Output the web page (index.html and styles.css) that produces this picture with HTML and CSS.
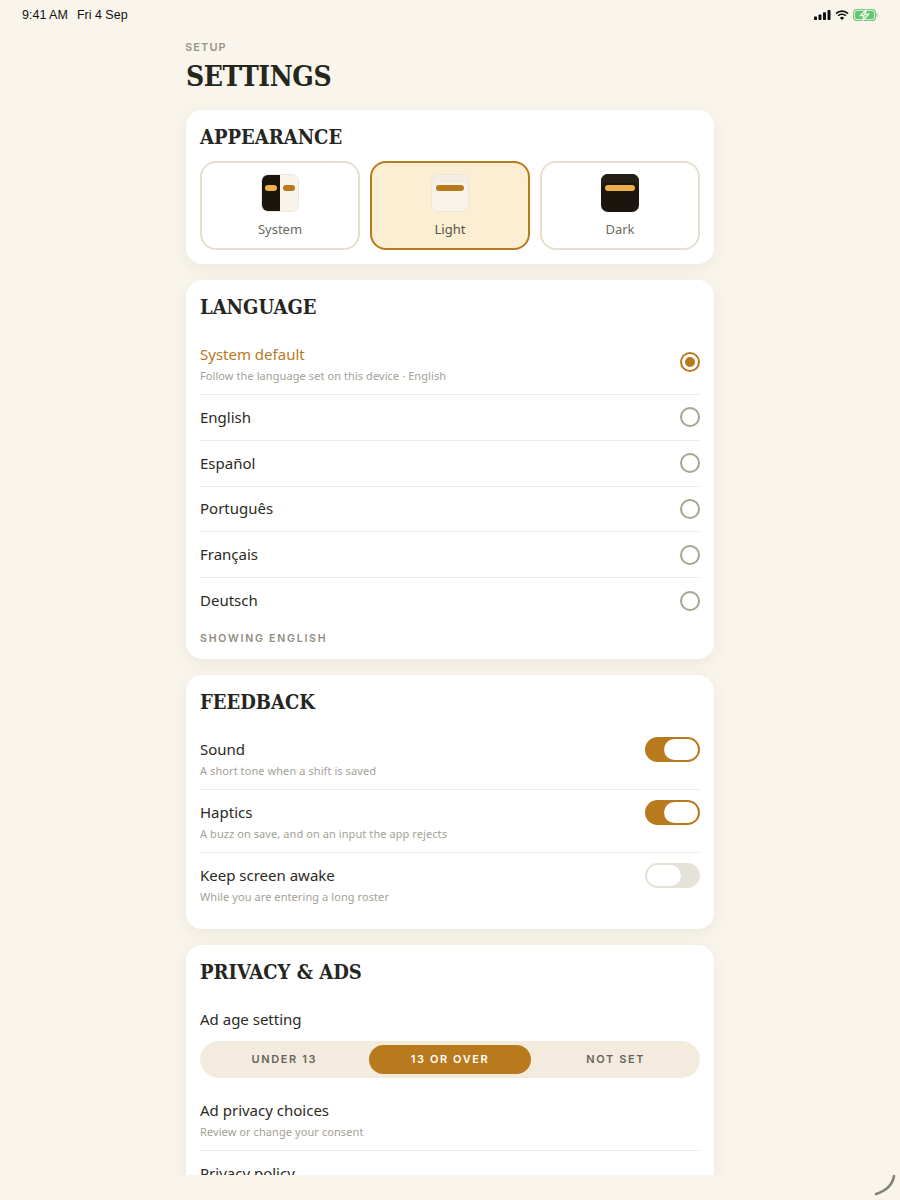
FILE: index.html
```html
<!DOCTYPE html>
<html lang="en">
  <head>
    <meta charset="UTF-8" />
    <meta name="viewport" content="width=device-width, initial-scale=1.0" />
    <title>Settings</title>
    <link rel="stylesheet" href="styles.css">
  </head>
  <body>
    <header class="status-bar">
      <div class="status-time">
        <span>9:41 AM</span>
        <span>Fri 4 Sep</span>
      </div>
      <div class="status-icons">
        <svg width="17" height="10" viewBox="0 0 17 10" aria-hidden="true">
          <rect x="0" y="6.5" width="3" height="3.5" rx="0.7" fill="#111" />
          <rect x="4.5" y="4.5" width="3" height="5.5" rx="0.7" fill="#111" />
          <rect x="9" y="2.2" width="3" height="7.8" rx="0.7" fill="#111" />
          <rect x="13.5" y="0" width="3" height="10" rx="0.7" fill="#111" />
        </svg>
        <svg width="14" height="10" viewBox="0 0 14 10" aria-hidden="true">
          <path d="M1 3.6a8.6 8.6 0 0 1 12 0M3.1 5.8a5.6 5.6 0 0 1 7.8 0" fill="none" stroke="#111" stroke-width="1.6" />
          <path d="M7 10 4.9 7.9a3 3 0 0 1 4.2 0z" fill="#111" />
        </svg>
        <svg width="25" height="12" viewBox="0 0 25 12" aria-hidden="true">
          <rect x="0.6" y="0.6" width="21.8" height="10.8" rx="3" fill="#f4f7e8" stroke="#72c97e" stroke-width="1.2" />
          <rect x="2" y="2" width="19" height="8" rx="2" fill="#62c673" />
          <path d="M23.4 4v4a2 2 0 0 0 1.3-2 2 2 0 0 0-1.3-2z" fill="#8fcf98" />
          <path d="M13.2 0.8 7.6 6.6h3.4l-1 4.6 5.6-6h-3.6z" fill="#62c673" stroke="#f4f7e8" stroke-width="1.4" />
        </svg>
      </div>
    </header>

    <div class="scroll">
      <main class="page">
        <p class="eyebrow">SETUP</p>
        <h1>SETTINGS</h1>

        <section class="card">
          <h2>APPEARANCE</h2>
          <div class="themes">
            <button class="theme">
              <span class="swatch swatch-system">
                <span class="half half-dark"><i class="bar bar-amber"></i></span>
                <span class="half half-light"><i class="bar bar-brown"></i></span>
              </span>
              <span class="theme-name">System</span>
            </button>
            <button class="theme is-active">
              <span class="swatch swatch-light"><i class="bar bar-brown"></i></span>
              <span class="theme-name">Light</span>
            </button>
            <button class="theme">
              <span class="swatch swatch-dark"><i class="bar bar-amber"></i></span>
              <span class="theme-name">Dark</span>
            </button>
          </div>
        </section>

        <section class="card">
          <h2>LANGUAGE</h2>
          <ul class="lang-list">
            <li class="lang lang-first is-selected">
              <div>
                <div class="row-title">System default</div>
                <div class="row-sub">Follow the language set on this device · English</div>
              </div>
              <span class="radio"></span>
            </li>
            <li class="lang"><div class="row-title">English</div><span class="radio"></span></li>
            <li class="lang"><div class="row-title">Español</div><span class="radio"></span></li>
            <li class="lang"><div class="row-title">Português</div><span class="radio"></span></li>
            <li class="lang"><div class="row-title">Français</div><span class="radio"></span></li>
            <li class="lang"><div class="row-title">Deutsch</div><span class="radio"></span></li>
          </ul>
          <p class="lang-note">SHOWING ENGLISH</p>
        </section>

        <section class="card">
          <h2>FEEDBACK</h2>
          <div class="toggle-list">
            <div class="toggle-row">
              <div class="toggle-text">
                <div class="row-title">Sound</div>
                <div class="row-sub">A short tone when a shift is saved</div>
              </div>
              <span class="switch is-on"></span>
            </div>
            <div class="toggle-row">
              <div class="toggle-text">
                <div class="row-title">Haptics</div>
                <div class="row-sub">A buzz on save, and on an input the app rejects</div>
              </div>
              <span class="switch is-on"></span>
            </div>
            <div class="toggle-row">
              <div class="toggle-text">
                <div class="row-title">Keep screen awake</div>
                <div class="row-sub">While you are entering a long roster</div>
              </div>
              <span class="switch"></span>
            </div>
          </div>
        </section>

        <section class="card">
          <h2>PRIVACY &amp; ADS</h2>
          <div class="row-title age-title">Ad age setting</div>
          <div class="segments">
            <span class="segment">UNDER 13</span>
            <span class="segment is-active">13 OR OVER</span>
            <span class="segment">NOT SET</span>
          </div>
          <div class="link-row">
            <div class="row-title">Ad privacy choices</div>
            <div class="row-sub">Review or change your consent</div>
          </div>
          <div class="link-row">
            <div class="row-title">Privacy policy</div>
          </div>
        </section>
      </main>
    </div>

    <svg class="corner-mark" width="24" height="24" viewBox="0 0 24 24" aria-hidden="true">
      <path d="M21 3C19.5 12 12.5 18 3 21" fill="none" stroke="#85827a" stroke-width="2.6" stroke-linecap="round" />
    </svg>
  </body>
</html>
```

FILE: styles.css
```css
* {
  box-sizing: border-box;
}

html,
body {
  margin: 0;
  height: 1200px;
  overflow: hidden;
}

body {
  background: #f9f5ec;
  color: #26251f;
  font-family: "Noto Sans", "Liberation Sans", sans-serif;
  position: relative;
}

.status-bar {
  display: flex;
  justify-content: space-between;
  align-items: center;
  height: 29px;
  padding: 1px 22px 0;
  color: #111;
  font-family: "Liberation Sans", sans-serif;
  font-size: 12.5px;
}

.status-time {
  display: flex;
  gap: 9px;
}

.status-icons {
  display: flex;
  align-items: center;
  gap: 4px;
}

.scroll {
  height: 1146px;
  overflow: hidden;
}

.page {
  width: 528px;
  margin: 0 auto;
}

.eyebrow {
  margin: 12px 0 0 -1px;
  color: #98968a;
  font-family: "Inter", sans-serif;
  font-size: 11px;
  font-weight: 600;
  line-height: 12px;
  letter-spacing: 1.1px;
}

h1 {
  margin: 5px 0 14px;
  color: #25271c;
  font-family: "DejaVu Serif Condensed", "DejaVu Serif", serif;
  font-size: 28px;
  font-weight: 700;
  line-height: 38px;
  letter-spacing: -0.4px;
}

h2 {
  margin: 0;
  color: #26251f;
  font-family: "DejaVu Serif Condensed", "DejaVu Serif", serif;
  font-size: 20px;
  font-weight: 700;
  line-height: 25px;
}

.card {
  margin-bottom: 16px;
  padding: 15px 14px 0;
  background: #fff;
  border-radius: 16px;
  box-shadow: 0 4px 16px rgba(120, 100, 60, 0.09);
}

.themes {
  display: flex;
  gap: 10px;
  margin-top: 11px;
  padding-bottom: 14px;
}

.theme {
  flex: 1;
  display: flex;
  flex-direction: column;
  align-items: center;
  height: 89px;
  padding: 11px 0 0;
  background: #fff;
  border: 2px solid #e6dfcf;
  border-radius: 16px;
  font: inherit;
}

.theme.is-active {
  background: #fbeed2;
  border-color: #b87a1c;
}

.swatch {
  display: flex;
  align-items: center;
  justify-content: center;
  width: 38px;
  height: 38px;
  padding: 0 4px 10px;
  border-radius: 7px;
  overflow: hidden;
}

.swatch-light {
  background: #f9f4ea;
  border: 1px solid #eee5d6;
  box-shadow: inset 0 8px 0 #f3eee5;
}

.swatch-dark {
  background: #1a150d;
  box-shadow: inset 0 9px 0 #241f15;
}

.swatch-system {
  padding: 0;
  border: 1px solid #eee5d6;
}

.half {
  flex: 1;
  display: flex;
  align-items: center;
  justify-content: center;
  height: 100%;
  padding-bottom: 10px;
}

.half-dark {
  background: #1a150d;
}

.half-light {
  background: #f9f4ea;
}

.bar {
  display: block;
  width: 100%;
  height: 6px;
  border-radius: 3px;
}

.half .bar {
  width: 12px;
}

.bar-amber {
  background: #eeb04a;
}

.bar-brown {
  background: #b87a1c;
}

.theme-name {
  margin-top: 8px;
  color: #6c6a62;
  font-size: 13px;
  line-height: 18px;
}

.is-active .theme-name {
  color: #55534a;
}

.row-title {
  color: #2b2a24;
  font-size: 15px;
  line-height: 21px;
}

.row-sub {
  margin-top: 3px;
  color: #a3a196;
  font-size: 11px;
  line-height: 15px;
  letter-spacing: 0.08px;
}

.lang-list {
  margin: 0;
  padding: 0;
  list-style: none;
}

.lang {
  display: flex;
  justify-content: space-between;
  align-items: center;
  height: 45.75px;
  border-bottom: 1px solid #f1eee7;
}

.lang-first {
  height: 66px;
  margin-top: 9px;
  padding-top: 4px;
}

.lang:last-child {
  border-bottom: 0;
}

.is-selected .row-title {
  color: #b87a1c;
}

.radio {
  flex: none;
  width: 20px;
  height: 20px;
  border: 2px solid #a5a591;
  border-radius: 50%;
}

.is-selected .radio {
  margin-bottom: 3px;
  border-color: #b87a1c;
}

.is-selected .radio::after {
  content: "";
  display: block;
  width: 10px;
  height: 10px;
  margin: 3px;
  background: #b87a1c;
  border-radius: 50%;
}

.lang-note {
  margin: 0;
  padding: 8px 0 13px;
  color: #8f8d80;
  font-family: "Inter", sans-serif;
  font-size: 10.5px;
  font-weight: 600;
  line-height: 14px;
  letter-spacing: 1.8px;
}

.toggle-list {
  margin-top: 12px;
}

.toggle-row {
  display: flex;
  justify-content: space-between;
  align-items: flex-start;
  height: 63px;
  padding-top: 7px;
  border-bottom: 1px solid #f1eee7;
}

.toggle-row:last-child {
  height: 76px;
  border-bottom: 0;
}

.toggle-text {
  padding-top: 5px;
}

.switch {
  flex: none;
  width: 55px;
  height: 25px;
  margin-top: 3px;
  padding: 2px;
  background: #e5e2d8;
  border-radius: 13px;
}

.switch::after {
  content: "";
  display: block;
  width: 34px;
  height: 21px;
  background: #fff;
  border-radius: 11px;
  box-shadow: 0 0 0 1px #e5e2d8;
}

.switch.is-on {
  background: #b87a1c;
  display: flex;
  justify-content: flex-end;
}

.switch.is-on::after {
  box-shadow: none;
}

.age-title {
  margin-top: 24px;
}

.segments {
  display: flex;
  gap: 3px;
  margin-top: 11px;
  padding: 4px 3px;
  background: #f3ecde;
  border-radius: 19px;
}

.segment {
  flex: 1;
  height: 29px;
  color: #67655a;
  font-family: "Inter", sans-serif;
  font-size: 11px;
  font-weight: 600;
  line-height: 29px;
  letter-spacing: 1.6px;
  text-align: center;
  border-radius: 15px;
}

.segment.is-active {
  background: #b87a1c;
  color: #fff;
}

.link-row {
  height: 63px;
  padding-top: 12px;
  border-bottom: 1px solid #f1eee7;
}

.segments + .link-row {
  margin-top: 10px;
}

.corner-mark {
  position: absolute;
  right: 3px;
  bottom: 3px;
}
```
